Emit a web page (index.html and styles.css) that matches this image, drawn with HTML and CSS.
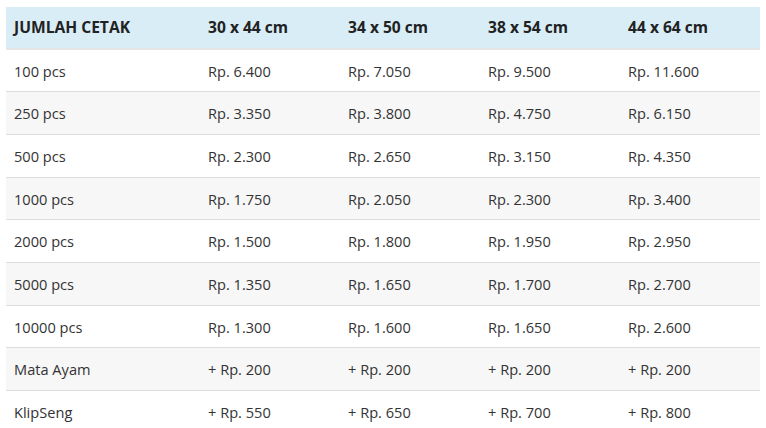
FILE: index.html
```html
<!DOCTYPE html>
<html>
<head>
<meta charset="utf-8">
<link rel="stylesheet" href="styles.css">
</head>
<body>
<table class="price-table">
  <thead>
    <tr><th>JUMLAH CETAK</th><th>30 x 44 cm</th><th>34 x 50 cm</th><th>38 x 54 cm</th><th>44 x 64 cm</th></tr>
  </thead>
  <tbody>
    <tr><td>100 pcs</td><td>Rp. 6.400</td><td>Rp. 7.050</td><td>Rp. 9.500</td><td>Rp. 11.600</td></tr>
    <tr><td>250 pcs</td><td>Rp. 3.350</td><td>Rp. 3.800</td><td>Rp. 4.750</td><td>Rp. 6.150</td></tr>
    <tr><td>500 pcs</td><td>Rp. 2.300</td><td>Rp. 2.650</td><td>Rp. 3.150</td><td>Rp. 4.350</td></tr>
    <tr><td>1000 pcs</td><td>Rp. 1.750</td><td>Rp. 2.050</td><td>Rp. 2.300</td><td>Rp. 3.400</td></tr>
    <tr><td>2000 pcs</td><td>Rp. 1.500</td><td>Rp. 1.800</td><td>Rp. 1.950</td><td>Rp. 2.950</td></tr>
    <tr><td>5000 pcs</td><td>Rp. 1.350</td><td>Rp. 1.650</td><td>Rp. 1.700</td><td>Rp. 2.700</td></tr>
    <tr><td>10000 pcs</td><td>Rp. 1.300</td><td>Rp. 1.600</td><td>Rp. 1.650</td><td>Rp. 2.600</td></tr>
    <tr><td>Mata Ayam</td><td>+ Rp. 200</td><td>+ Rp. 200</td><td>+ Rp. 200</td><td>+ Rp. 200</td></tr>
    <tr><td>KlipSeng</td><td>+ Rp. 550</td><td>+ Rp. 650</td><td>+ Rp. 700</td><td>+ Rp. 800</td></tr>
  </tbody>
</table>
</body>
</html>
```
FILE: styles.css
```css
html, body {
  margin: 0;
  padding: 0;
  background: #ffffff;
}
body {
  padding: 7px 6px;
  font-family: "Open Sans", "Noto Sans", sans-serif;
  font-size: 14.6px;
  color: #333333;
}
.price-table {
  border-collapse: collapse;
  width: 754px;
  table-layout: fixed;
}
.price-table th,
.price-table td {
  text-align: left;
  padding: 11px 8px 9px;
  line-height: 21.67px;
  width: 124px;
}
.price-table th:first-child,
.price-table td:first-child {
  width: 178px;
}
.price-table th {
  background: #d9edf7;
  font-weight: bold;
  font-size: 15.6px;
  color: #222222;
  border-bottom: 2px solid #e6e6e6;
  padding-top: 10px;
  padding-bottom: 9px;
}
.price-table td {
  border-top: 1px solid #dddddd;
}
.price-table tbody tr:first-child td {
  border-top: none;
}
.price-table tbody tr:nth-child(even) td {
  background: #f7f7f7;
}
```
